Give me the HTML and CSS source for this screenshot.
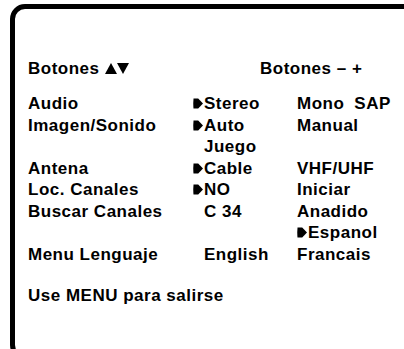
FILE: index.html
```html
<!DOCTYPE html>
<html lang="es">
<head>
  <meta charset="UTF-8">
  <meta name="viewport" content="width=device-width, initial-scale=1.0">
  <title>Menu de Configuracion</title>
  <link rel="stylesheet" href="styles.css">
</head>
<body>
  <div class="osd">
    <div class="head">
      <span class="keys">Botones
        <svg class="tri" viewBox="0 0 11 10"><polygon points="5.5,0 11,10 0,10"/></svg><svg class="tri" viewBox="0 0 11 10"><polygon points="0,0 11,0 5.5,10"/></svg>
      </span>
      <span class="keys-right">Botones &ndash; +</span>
    </div>

    <div class="menu">
      <span>Audio</span>
      <span class="opt sel"><svg class="arrow" viewBox="0 0 10 11"><path d="M0.5 0.5 H5.2 L10 5.5 L5.2 10.5 H0.5 Q0 5.5 0.5 0.5 Z"/></svg>Stereo</span>
      <span class="pair"><span>Mono</span><span>SAP</span></span>

      <span>Imagen/Sonido</span>
      <span class="opt sel"><svg class="arrow" viewBox="0 0 10 11"><path d="M0.5 0.5 H5.2 L10 5.5 L5.2 10.5 H0.5 Q0 5.5 0.5 0.5 Z"/></svg>Auto</span>
      <span>Manual</span>

      <span></span>
      <span class="opt">Juego</span>
      <span></span>

      <span>Antena</span>
      <span class="opt sel"><svg class="arrow" viewBox="0 0 10 11"><path d="M0.5 0.5 H5.2 L10 5.5 L5.2 10.5 H0.5 Q0 5.5 0.5 0.5 Z"/></svg>Cable</span>
      <span>VHF/UHF</span>

      <span>Loc. Canales</span>
      <span class="opt sel"><svg class="arrow" viewBox="0 0 10 11"><path d="M0.5 0.5 H5.2 L10 5.5 L5.2 10.5 H0.5 Q0 5.5 0.5 0.5 Z"/></svg>NO</span>
      <span>Iniciar</span>

      <span>Buscar Canales</span>
      <span class="opt">C 34</span>
      <span>Anadido</span>

      <span></span>
      <span></span>
      <span class="sel"><svg class="arrow" viewBox="0 0 10 11"><path d="M0.5 0.5 H5.2 L10 5.5 L5.2 10.5 H0.5 Q0 5.5 0.5 0.5 Z"/></svg>Espanol</span>

      <span>Menu Lenguaje</span>
      <span class="opt">English</span>
      <span>Francais</span>
    </div>

    <p class="exit">Use MENU para salirse</p>
  </div>
</body>
</html>
```

FILE: styles.css
```css
html, body {
  margin: 0;
  padding: 0;
  background: #fff;
  overflow: hidden;
}

body {
  font-family: "Liberation Sans", Arial, sans-serif;
  font-weight: bold;
  font-size: 17px;
  line-height: 21.5px;
  letter-spacing: 0.5px;
  color: #000;
}

.osd {
  margin: 4px 0 0 10px;
  width: 420px;
  height: 297px;
  border: 5px solid #000;
  border-radius: 15px;
  padding: 49px 0 0 13px;
  box-sizing: content-box;
}

.head {
  display: flex;
  margin-bottom: 13.5px;
}

.keys {
  width: 232px;
}

.tri {
  width: 12px;
  height: 11px;
  vertical-align: 0;
}

.menu {
  display: grid;
  grid-template-columns: 165px 104px 1fr;
}

.sel {
  display: flex;
  align-items: center;
  gap: 1px;
}

.arrow {
  width: 10px;
  height: 11px;
}

.opt {
  padding-left: 11px;
}

.opt.sel {
  padding-left: 0;
}

.pair {
  display: flex;
  gap: 10px;
}

.exit {
  margin: 19.5px 0 0;
}
```
